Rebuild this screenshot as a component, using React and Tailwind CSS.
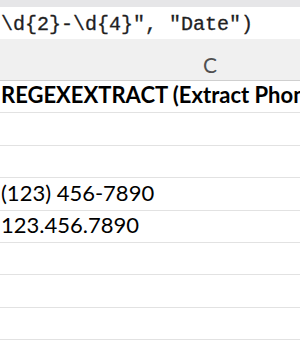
import React from 'react';

const rows = [
    { h: 'h-[32px]', text: 'REGEXEXTRACT (Extract Phone Numbers)', bold: true },
    { h: 'h-[33px]', text: '' },
    { h: 'h-[32px]', text: '' },
    { h: 'h-[33px]', text: '(123) 456-7890' },
    { h: 'h-[32px]', text: '123.456.7890' },
    { h: 'h-[32px]', text: '' },
    { h: 'h-[33px]', text: '' },
    { h: 'h-[32px]', text: '' },
    { h: 'h-[32px]', text: '' },
];

const App = () => {
    return (
        <div className="w-[300px] h-[350px] overflow-hidden bg-white">
            {/* top strip */}
            <div className="h-[7px] bg-[#e6e6e8]" />

            {/* formula bar */}
            <div className="h-[32px] bg-white pl-[1px] pt-[3px] whitespace-nowrap overflow-hidden">
                <span className="font-['Liberation_Mono',monospace] text-[20px] leading-[30px] text-[#1f1f1f] [-webkit-text-stroke:0.3px_#1f1f1f]">
                    {'\\d{2}-\\d{4}", "Date")'}
                </span>
            </div>

            {/* column header */}
            <div className="h-[42px] bg-[#f0f0f0] border-b border-[#cfcfcf] pl-[203px] pt-[15px]">
                <span className="font-['Lato',sans-serif] text-[21px] leading-none text-[#505050]">C</span>
            </div>

            {/* cells */}
            {rows.map((r, i) => (
                <div
                    key={i}
                    className={`${r.h} border-b border-[#e2e2e2] flex items-end pb-[6px] pl-[1px] whitespace-nowrap overflow-hidden`}
                >
                    <span
                        className={`font-['Lato',sans-serif] text-[22px] leading-none text-black ${r.bold ? 'font-bold' : ''}`}
                    >
                        {r.text}
                    </span>
                </div>
            ))}
        </div>
    );
};

export default App;
